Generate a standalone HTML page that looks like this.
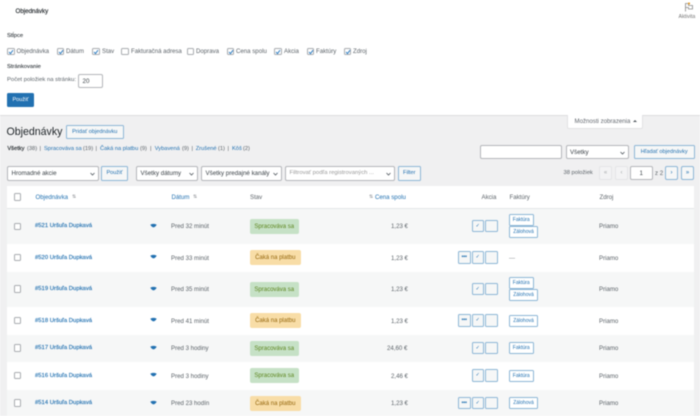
<!DOCTYPE html>
<html lang="sk"><head><meta charset="utf-8"><title>Objednávky</title>
<style>
html,body{margin:0;padding:0;width:700px;height:416px;overflow:hidden;background:#fff}
#p{position:relative;width:700px;height:416px;overflow:hidden;font:6.1px/11.5px "Liberation Sans",sans-serif;color:#5c6369;filter:blur(.4px)}
#p div,#p a,#p svg{position:absolute;box-sizing:border-box}
.t{white-space:nowrap;height:10px}
.l{color:#2271b1}
.b{-webkit-text-stroke:.14px currentColor}
.n{font-size:5.9px}
.cb{width:7.5px;height:7.5px;border:1px solid #a9acb0;border-radius:1.5px;background:#fff}
.cb svg{left:0;top:0}
.btn{border:1px solid #8db6d6;border-radius:1.5px;background:#f6f7f7;color:#2271b1;text-align:center;white-space:nowrap;line-height:13.5px;font-size:5.6px}
.sel,.inp{border:1px solid #b4b6ba;border-radius:2px;background:#fff;white-space:nowrap;line-height:13px;padding-left:3.5px;color:#3c4348;font-size:6.2px}
.sel svg{right:3px;top:4.5px}
.r{left:7px;width:687px}
.st{left:250px;height:15px;border-radius:2px;line-height:17px;text-align:center;font-size:6px}
.gr{width:48.5px;background:#c6e1c6;color:#5b841b}
.or{width:50.5px;background:#f8dda7;color:#94660c}
.ic{width:12.5px;height:12.5px;border:1px solid #8db6d6;border-radius:1.5px;background:#f6f7f7;color:#2271b1;text-align:center;font-size:5px;line-height:10.5px}
.fb{left:509px;height:12px;border:1px solid #8db6d6;border-radius:1.5px;background:#fff;color:#2271b1;text-align:center;font-size:5px;line-height:11px}
.f{width:24.5px}.z{width:29px}
.pg{width:13px;height:13.5px;border-radius:2px;text-align:center;line-height:12px;font-size:6px}
.on{border:1px solid #8db6d6;color:#2271b1;background:#f6f7f7}
.off{border:1px solid #e4e5e7;color:#a7aaad;background:#f3f3f4}
</style></head><body><div id="p">

<div style="left:0;top:0;width:700px;height:115px;background:#fff"></div>
<div style="left:0;top:115px;width:700px;height:301px;background:#f0f0f1;border-top:1px solid #dcdcde"></div>

<div class="t b" style="left:15.5px;top:6px;color:#1d2327;font-size:6.2px">Objednávky</div>

<svg style="left:684px;top:2px" width="10" height="10" viewBox="0 0 10 10"><path d="M1.5 9.5V1.5H4.5V3.5H8.5V7H4.5V5.5H1.5" fill="none" stroke="#8a8a8a" stroke-width=".8"/><circle cx="5" cy="1.5" r="1.1" fill="#e09b2d"/></svg>
<div class="t" style="left:678.5px;top:12px;font-size:5.2px;color:#757575">Aktivita</div>

<div class="t" style="left:7px;top:31px;color:#2c3338;font-size:5.8px;-webkit-text-stroke:.08px currentColor">Stĺpce</div>

<div class="cb" style="left:7px;top:47.5px"><svg width="6" height="6" viewBox="0 0 6 6"><path d="M1 3L2.5 4.6L5 1.2" fill="none" stroke="#3582c4" stroke-width="1"/></svg></div>
<div class="t" style="left:16.5px;top:46px">Objednávka</div>
<div class="cb" style="left:56.5px;top:47.5px"><svg width="6" height="6" viewBox="0 0 6 6"><path d="M1 3L2.5 4.6L5 1.2" fill="none" stroke="#3582c4" stroke-width="1"/></svg></div>
<div class="t" style="left:66px;top:46px">Dátum</div>
<div class="cb" style="left:92px;top:47.5px"><svg width="6" height="6" viewBox="0 0 6 6"><path d="M1 3L2.5 4.6L5 1.2" fill="none" stroke="#3582c4" stroke-width="1"/></svg></div>
<div class="t" style="left:102px;top:46px">Stav</div>
<div class="cb" style="left:121px;top:47.5px"></div>
<div class="t" style="left:131px;top:46px">Fakturačná adresa</div>
<div class="cb" style="left:186.5px;top:47.5px"></div>
<div class="t" style="left:196px;top:46px">Doprava</div>
<div class="cb" style="left:226.5px;top:47.5px"><svg width="6" height="6" viewBox="0 0 6 6"><path d="M1 3L2.5 4.6L5 1.2" fill="none" stroke="#3582c4" stroke-width="1"/></svg></div>
<div class="t" style="left:236px;top:46px">Cena spolu</div>
<div class="cb" style="left:274px;top:47.5px"><svg width="6" height="6" viewBox="0 0 6 6"><path d="M1 3L2.5 4.6L5 1.2" fill="none" stroke="#3582c4" stroke-width="1"/></svg></div>
<div class="t" style="left:284px;top:46px">Akcia</div>
<div class="cb" style="left:306.5px;top:47.5px"><svg width="6" height="6" viewBox="0 0 6 6"><path d="M1 3L2.5 4.6L5 1.2" fill="none" stroke="#3582c4" stroke-width="1"/></svg></div>
<div class="t" style="left:316px;top:46px">Faktúry</div>
<div class="cb" style="left:343.5px;top:47.5px"><svg width="6" height="6" viewBox="0 0 6 6"><path d="M1 3L2.5 4.6L5 1.2" fill="none" stroke="#3582c4" stroke-width="1"/></svg></div>
<div class="t" style="left:353px;top:46px">Zdroj</div>

<div class="t" style="left:7px;top:61.5px;color:#2c3338;font-size:5.8px;-webkit-text-stroke:.08px currentColor">Stránkovanie</div>
<div class="t" style="left:7px;top:75px;font-size:5.9px">Počet položiek na stránku:</div>
<div class="inp" style="left:77.5px;top:73.5px;width:25.5px;height:14px;padding-left:4px">20</div>
<div class="btn" style="left:7px;top:93px;width:27px;height:14px;background:#2271b1;border-color:#2271b1;color:#fff;line-height:13px">Použiť</div>

<div style="left:567px;top:115px;width:76px;height:13.5px;background:#fff;border:1px solid #e2e2e4;border-top:0;border-radius:0 0 2px 2px"></div>
<div class="t" style="left:574.5px;top:116px;color:#646970">Možnosti zobrazenia</div>
<div style="left:632.5px;top:120px;width:0;height:0;border:2px solid transparent;border-top:0;border-bottom:2.4px solid #50575e"></div>

<div class="t" style="left:6.5px;font-size:10.6px;line-height:18px;height:18px;top:122.5px;color:#1d2327">Objednávky</div>
<div class="btn" style="left:65.5px;top:124.5px;width:58.5px;height:14.5px;line-height:13.5px">Pridať objednávku</div>

<div class="t b" style="left:7.4px;top:144px;font-size:5.7px;color:#1d2327">Všetky</div>
<div class="t" style="left:27px;top:144px;font-size:5.7px">(38)</div>
<div class="t" style="left:39.5px;top:144px;font-size:5.7px">|</div>
<div class="t l" style="left:44px;top:144px;font-size:5.7px">Spracováva sa</div>
<div class="t" style="left:83px;top:144px;font-size:5.7px">(19)</div>
<div class="t" style="left:95.5px;top:144px;font-size:5.7px">|</div>
<div class="t l" style="left:100px;top:144px;font-size:5.7px">Čaká na platbu</div>
<div class="t" style="left:140px;top:144px;font-size:5.7px">(9)</div>
<div class="t" style="left:150px;top:144px;font-size:5.7px">|</div>
<div class="t l" style="left:154.7px;top:144px;font-size:5.7px">Vybavená</div>
<div class="t" style="left:182px;top:144px;font-size:5.7px">(9)</div>
<div class="t" style="left:191.5px;top:144px;font-size:5.7px">|</div>
<div class="t l" style="left:195.7px;top:144px;font-size:5.7px">Zrušené</div>
<div class="t" style="left:218px;top:144px;font-size:5.7px">(1)</div>
<div class="t" style="left:227.5px;top:144px;font-size:5.7px">|</div>
<div class="t l" style="left:232px;top:144px;font-size:5.7px">Kôš</div>
<div class="t" style="left:243px;top:144px;font-size:5.7px">(2)</div>

<div class="inp" style="left:480px;top:145px;width:81.5px;height:13.5px"></div>
<div class="sel" style="left:565.5px;top:145px;width:63.5px;height:13.5px">Všetky<svg width="5" height="4" viewBox="0 0 5 4"><path d="M.5 1L2.5 3L4.5 1" fill="none" stroke="#50575e" stroke-width=".8"/></svg></div>
<div class="btn" style="left:634px;top:145px;width:60.5px;height:14px">Hľadať objednávky</div>

<div class="sel" style="left:7px;top:166px;width:91.5px;height:14.5px;line-height:13.5px">Hromadné akcie<svg width="5" height="4" viewBox="0 0 5 4"><path d="M.5 1L2.5 3L4.5 1" fill="none" stroke="#50575e" stroke-width=".8"/></svg></div>
<div class="btn" style="left:101px;top:166px;width:27px;height:14.5px">Použiť</div>
<div class="sel" style="left:136px;top:166px;width:61.5px;height:14.5px;line-height:13.5px">Všetky dátumy<svg width="5" height="4" viewBox="0 0 5 4"><path d="M.5 1L2.5 3L4.5 1" fill="none" stroke="#50575e" stroke-width=".8"/></svg></div>
<div class="sel" style="left:201px;top:166px;width:81px;height:14.5px;line-height:13.5px">Všetky predajné kanály<svg width="5" height="4" viewBox="0 0 5 4"><path d="M.5 1L2.5 3L4.5 1" fill="none" stroke="#50575e" stroke-width=".8"/></svg></div>
<div class="sel" style="left:285px;top:166px;width:110px;height:14.5px;line-height:13.5px;color:#999;font-size:5.9px">Filtrovať podľa registrovaných ...<svg width="5" height="4" viewBox="0 0 5 4"><path d="M.5 1L2.5 3L4.5 1" fill="none" stroke="#50575e" stroke-width=".8"/></svg></div>
<div class="btn" style="left:398px;top:166px;width:22.5px;height:14.5px">Filter</div>

<div class="t" style="left:563.5px;top:168px;font-size:5.8px">38 položiek</div>
<div class="pg off" style="left:599px;top:166px">«</div>
<div class="pg off" style="left:615px;top:166px">‹</div>
<div class="inp" style="left:630px;top:166px;width:22.5px;height:14px;padding:0;text-align:center">1</div>
<div class="t" style="left:655px;top:168px">z 2</div>
<div class="pg on" style="left:665px;top:166px">›</div>
<div class="pg on" style="left:681px;top:166px">»</div>

<!-- table -->
<div class="r" style="top:185.5px;height:23px;background:#fff;border-bottom:1.5px solid #e4e6e8"></div>
<div class="r" style="top:209px;height:35px;background:#f6f7f7"></div>
<div class="r" style="top:244px;height:27.5px;background:#fff"></div>
<div class="r" style="top:271.5px;height:35.5px;background:#f6f7f7"></div>
<div class="r" style="top:307px;height:27.5px;background:#fff"></div>
<div class="r" style="top:334.5px;height:27.5px;background:#f6f7f7"></div>
<div class="r" style="top:362px;height:27.5px;background:#fff"></div>
<div class="r" style="top:389.5px;height:27px;background:#f6f7f7"></div>

<div class="cb" style="left:13.5px;top:193px"></div>
<div class="t l" style="left:35.5px;top:192px">Objednávka</div>
<div class="t" style="left:72px;top:192px;color:#8c8f94;font-size:5px">⇅</div>
<div class="t l" style="left:171.5px;top:192px">Dátum</div>
<div class="t" style="left:193px;top:192px;color:#8c8f94;font-size:5px">⇅</div>
<div class="t" style="left:250px;top:192px">Stav</div>
<div class="t" style="left:369px;top:192px;color:#8c8f94;font-size:5px">⇅</div>
<div class="t l" style="left:375px;top:192px">Cena spolu</div>
<div class="t" style="left:481.5px;top:192px">Akcia</div>
<div class="t" style="left:509.5px;top:192px">Faktúry</div>
<div class="t" style="left:599.5px;top:192px">Zdroj</div>

<!-- row 1 -->
<div class="cb" style="left:13.5px;top:222.5px"></div>
<div class="t l b n" style="left:35px;top:221px">#521 Uršuľa Dupkavá</div>
<svg style="left:149.5px;top:222.5px" width="7" height="5" viewBox="0 0 7 5"><path d="M.3 1.8C2 .6 5 .6 6.7 1.8C5.8 3.2 4.6 4.4 3.5 4.4C2.4 4.4 1.2 3.2 .3 1.8Z" fill="#2271b1"/></svg>
<div class="t" style="left:171px;top:221px">Pred 32 minút</div>
<div class="st gr" style="top:218.5px">Spracováva sa</div>
<div class="t" style="left:391px;top:221px;width:16px;text-align:right">1,23 €</div>
<div class="ic" style="left:471.5px;top:219.5px">✓</div>
<div class="ic" style="left:485px;top:219.5px"></div>
<div class="fb f" style="top:214px">Faktúra</div>
<div class="fb z" style="top:226px">Zálohová</div>
<div class="t" style="left:599px;top:221px">Priamo</div>

<!-- row 2 -->
<div class="cb" style="left:13.5px;top:253.5px"></div>
<div class="t l b n" style="left:35px;top:252.5px">#520 Uršuľa Dupkavá</div>
<svg style="left:149.5px;top:254px" width="7" height="5" viewBox="0 0 7 5"><path d="M.3 1.8C2 .6 5 .6 6.7 1.8C5.8 3.2 4.6 4.4 3.5 4.4C2.4 4.4 1.2 3.2 .3 1.8Z" fill="#2271b1"/></svg>
<div class="t" style="left:171px;top:252.5px">Pred 33 minút</div>
<div class="st or" style="top:250px">Čaká na platbu</div>
<div class="t" style="left:391px;top:252.5px;width:16px;text-align:right">1,23 €</div>
<div class="ic b" style="left:458px;top:251px">•••</div>
<div class="ic" style="left:471.5px;top:251px">✓</div>
<div class="ic" style="left:485px;top:251px"></div>
<div class="t" style="left:509px;top:252.5px;color:#8c8f94">—</div>
<div class="t" style="left:599px;top:252.5px">Priamo</div>

<!-- row 3 -->
<div class="cb" style="left:13.5px;top:285px"></div>
<div class="t l b n" style="left:35px;top:284px">#519 Uršuľa Dupkavá</div>
<svg style="left:149.5px;top:285.5px" width="7" height="5" viewBox="0 0 7 5"><path d="M.3 1.8C2 .6 5 .6 6.7 1.8C5.8 3.2 4.6 4.4 3.5 4.4C2.4 4.4 1.2 3.2 .3 1.8Z" fill="#2271b1"/></svg>
<div class="t" style="left:171px;top:284px">Pred 35 minút</div>
<div class="st gr" style="top:281.5px">Spracováva sa</div>
<div class="t" style="left:391px;top:284px;width:16px;text-align:right">1,23 €</div>
<div class="ic" style="left:471.5px;top:282.5px">✓</div>
<div class="ic" style="left:485px;top:282.5px"></div>
<div class="fb f" style="top:277px">Faktúra</div>
<div class="fb z" style="top:289px">Zálohová</div>
<div class="t" style="left:599px;top:284px">Priamo</div>

<!-- row 4 -->
<div class="cb" style="left:13.5px;top:316.5px"></div>
<div class="t l b n" style="left:35px;top:315.5px">#518 Uršuľa Dupkavá</div>
<svg style="left:149.5px;top:317px" width="7" height="5" viewBox="0 0 7 5"><path d="M.3 1.8C2 .6 5 .6 6.7 1.8C5.8 3.2 4.6 4.4 3.5 4.4C2.4 4.4 1.2 3.2 .3 1.8Z" fill="#2271b1"/></svg>
<div class="t" style="left:171px;top:315.5px">Pred 41 minút</div>
<div class="st or" style="top:313px">Čaká na platbu</div>
<div class="t" style="left:391px;top:315.5px;width:16px;text-align:right">1,23 €</div>
<div class="ic b" style="left:458px;top:314px">•••</div>
<div class="ic" style="left:471.5px;top:314px">✓</div>
<div class="ic" style="left:485px;top:314px"></div>
<div class="fb z" style="top:314.5px">Zálohová</div>
<div class="t" style="left:599px;top:315.5px">Priamo</div>

<!-- row 5 -->
<div class="cb" style="left:13.5px;top:344px"></div>
<div class="t l b n" style="left:35px;top:343px">#517 Uršuľa Dupkavá</div>
<svg style="left:149.5px;top:344.5px" width="7" height="5" viewBox="0 0 7 5"><path d="M.3 1.8C2 .6 5 .6 6.7 1.8C5.8 3.2 4.6 4.4 3.5 4.4C2.4 4.4 1.2 3.2 .3 1.8Z" fill="#2271b1"/></svg>
<div class="t" style="left:171px;top:343px">Pred 3 hodiny</div>
<div class="st gr" style="top:340.5px">Spracováva sa</div>
<div class="t" style="left:387px;top:343px;width:20px;text-align:right">24,60 €</div>
<div class="ic" style="left:471.5px;top:341.5px">✓</div>
<div class="ic" style="left:485px;top:341.5px"></div>
<div class="fb f" style="top:342px">Faktúra</div>
<div class="t" style="left:599px;top:343px">Priamo</div>

<!-- row 6 -->
<div class="cb" style="left:13.5px;top:371.5px"></div>
<div class="t l b n" style="left:35px;top:370.5px">#516 Uršuľa Dupkavá</div>
<svg style="left:149.5px;top:372px" width="7" height="5" viewBox="0 0 7 5"><path d="M.3 1.8C2 .6 5 .6 6.7 1.8C5.8 3.2 4.6 4.4 3.5 4.4C2.4 4.4 1.2 3.2 .3 1.8Z" fill="#2271b1"/></svg>
<div class="t" style="left:171px;top:370.5px">Pred 3 hodiny</div>
<div class="st gr" style="top:368px">Spracováva sa</div>
<div class="t" style="left:391px;top:370.5px;width:16px;text-align:right">2,46 €</div>
<div class="ic" style="left:471.5px;top:369px">✓</div>
<div class="ic" style="left:485px;top:369px"></div>
<div class="fb f" style="top:369.5px">Faktúra</div>
<div class="t" style="left:599px;top:370.5px">Priamo</div>

<!-- row 7 -->
<div class="cb" style="left:13.5px;top:399px"></div>
<div class="t l b n" style="left:35px;top:398px">#514 Uršuľa Dupkavá</div>
<svg style="left:149.5px;top:399.5px" width="7" height="5" viewBox="0 0 7 5"><path d="M.3 1.8C2 .6 5 .6 6.7 1.8C5.8 3.2 4.6 4.4 3.5 4.4C2.4 4.4 1.2 3.2 .3 1.8Z" fill="#2271b1"/></svg>
<div class="t" style="left:171px;top:398px">Pred 23 hodín</div>
<div class="st or" style="top:395.5px">Čaká na platbu</div>
<div class="t" style="left:391px;top:398px;width:16px;text-align:right">1,23 €</div>
<div class="ic b" style="left:458px;top:396.5px">•••</div>
<div class="ic" style="left:471.5px;top:396.5px">✓</div>
<div class="ic" style="left:485px;top:396.5px"></div>
<div class="fb z" style="top:397px">Zálohová</div>
<div class="t" style="left:599px;top:398px">Priamo</div>

</div></body></html>
